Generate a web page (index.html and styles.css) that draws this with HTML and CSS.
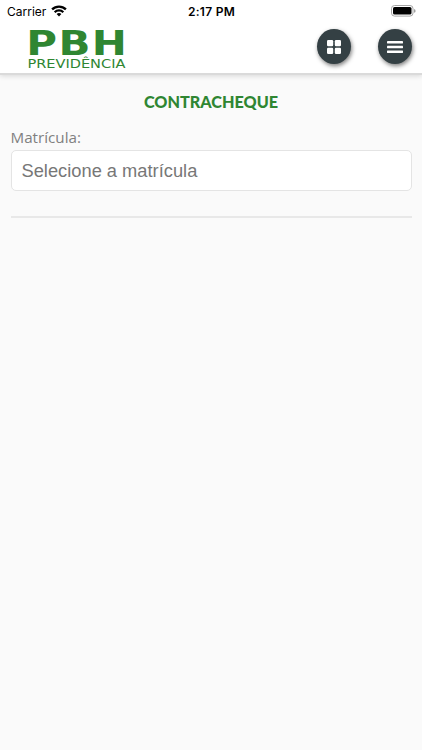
FILE: index.html
```
<!DOCTYPE html>
<html lang="pt-BR">
<head>
  <meta charset="UTF-8">
  <title>PBH Previdência - Contracheque</title>
  <meta name="viewport" content="width=device-width, initial-scale=1.0">
  <link rel="stylesheet" href="styles.css">
</head>
<body>

  <header class="topbar">
    <div class="status">
      <div class="carrier">
        <span>Carrier</span>
        <svg class="wifi" width="16" height="12" viewBox="0 0 16 12" fill="none" stroke="#000" stroke-width="2.3">
          <path d="M1.1 4.4a9.8 9.8 0 0 1 13.8 0"/>
          <path d="M3.7 7.2a6.1 6.1 0 0 1 8.6 0"/>
          <path d="M8 11.5 5.6 9.1a3.4 3.4 0 0 1 4.8 0z" fill="#000" stroke="none"/>
        </svg>
      </div>
      <span class="time">2:17 PM</span>
      <svg class="battery" width="25" height="12" viewBox="0 0 25 12">
        <rect x="0.5" y="0.5" width="21.5" height="10.6" rx="3" fill="none" stroke="#a5a5a5"/>
        <rect x="2" y="2" width="18.5" height="7.6" rx="1.6"/>
        <path d="M23.2 4v3.8q1.3-.6 1.3-1.9t-1.3-1.9z" fill="#8a8a8a"/>
      </svg>
    </div>

    <div class="bar">
      <svg class="logo" width="100" height="42" viewBox="0 0 100 42">
        <text class="logo-name" x="-1.8" y="26.6" textLength="102.2" lengthAdjust="spacingAndGlyphs">PBH</text>
        <text class="logo-sub" x="-0.6" y="39.7" textLength="98" lengthAdjust="spacingAndGlyphs">PREVIDÊNCIA</text>
      </svg>
      <div class="actions">
        <button class="round-btn" aria-label="Serviços">
          <svg width="14" height="14" viewBox="0 0 14 14" fill="#fff">
            <rect width="6.2" height="6.2" rx="1.2"/>
            <rect x="7.8" width="6.2" height="6.2" rx="1.2"/>
            <rect y="7.8" width="6.2" height="6.2" rx="1.2"/>
            <rect x="7.8" y="7.8" width="6.2" height="6.2" rx="1.2"/>
          </svg>
        </button>
        <button class="round-btn" aria-label="Menu">
          <svg width="16" height="12" viewBox="0 0 16 12" fill="#fff">
            <rect width="16" height="2.4" rx="0.4"/>
            <rect y="4.8" width="16" height="2.4" rx="0.4"/>
            <rect y="9.6" width="16" height="2.4" rx="0.4"/>
          </svg>
        </button>
      </div>
    </div>
  </header>

  <main>
    <h1>CONTRACHEQUE</h1>
    <label for="matricula">Matrícula:</label>
    <input id="matricula" class="field" type="text" placeholder="Selecione a matrícula" readonly>
    <hr>
  </main>

</body>
</html>
```
FILE: styles.css
```
:root {
  --green: #2f8632;
  --dark: #344044;
  --bg: #fafafa;
  --line: #e4e4e4;
}

* {
  box-sizing: border-box;
}

body {
  margin: 0;
  min-height: 100vh;
  background: var(--bg);
  font-family: "Open Sans", sans-serif;
}

.topbar {
  height: 75px;
  background: #fff;
  border-bottom: 2px solid #dadada;
  box-shadow: 0 1px 5px rgba(0,0,0,0.14);
}

.status {
  height: 22px;
  padding: 0 6px 0 7px;
  display: grid;
  grid-template-columns: 1fr auto 1fr;
  align-items: center;
  font-family: Inter, sans-serif;
  font-size: 12px;
  color: #000;
}

.carrier {
  display: flex;
  align-items: center;
  gap: 5px;
}

.wifi {
  margin-top: -1px;
}

.time {
  font-weight: 600;
  letter-spacing: 0.3px;
}

.battery {
  justify-self: end;
}

.bar {
  display: flex;
  justify-content: space-between;
  padding: 6px 10px 0 28px;
}

.logo {
  overflow: visible;
}

.logo text {
  fill: var(--green);
  font-family: "DejaVu Sans", sans-serif;
}

.logo .logo-name {
  font-size: 34.5px;
  font-weight: bold;
  letter-spacing: 1.2px;
}

.logo .logo-sub {
  font-size: 11.4px;
}

.actions {
  display: flex;
  gap: 27px;
  padding-top: 1px;
}

.round-btn {
  width: 34px;
  height: 35px;
  padding: 0;
  border: none;
  border-radius: 50%;
  background: var(--dark);
  display: flex;
  align-items: center;
  justify-content: center;
  box-shadow: 1px 2px 4px rgba(0,0,0,0.5);
}

main {
  padding: 17px 10.5px 0;
}

h1 {
  margin: 0 0 15px;
  text-align: center;
  font-family: Lato, sans-serif;
  font-size: 16.2px;
  font-weight: 900;
  line-height: 20px;
  color: var(--green);
}

label {
  display: block;
  margin-bottom: 3px;
  font-size: 15.2px;
  line-height: 20px;
  color: #808080;
}

.field {
  display: block;
  width: 100%;
  height: 41px;
  padding: 0 10px;
  border: 1px solid var(--line);
  border-radius: 5px;
  background: #fff;
  font-family: "Liberation Sans", sans-serif;
  font-size: 18.3px;
}

.field::placeholder {
  color: #777;
}

hr {
  height: 2px;
  margin: 25px 0 0;
  border: none;
  background: #e8e8e8;
}
```
